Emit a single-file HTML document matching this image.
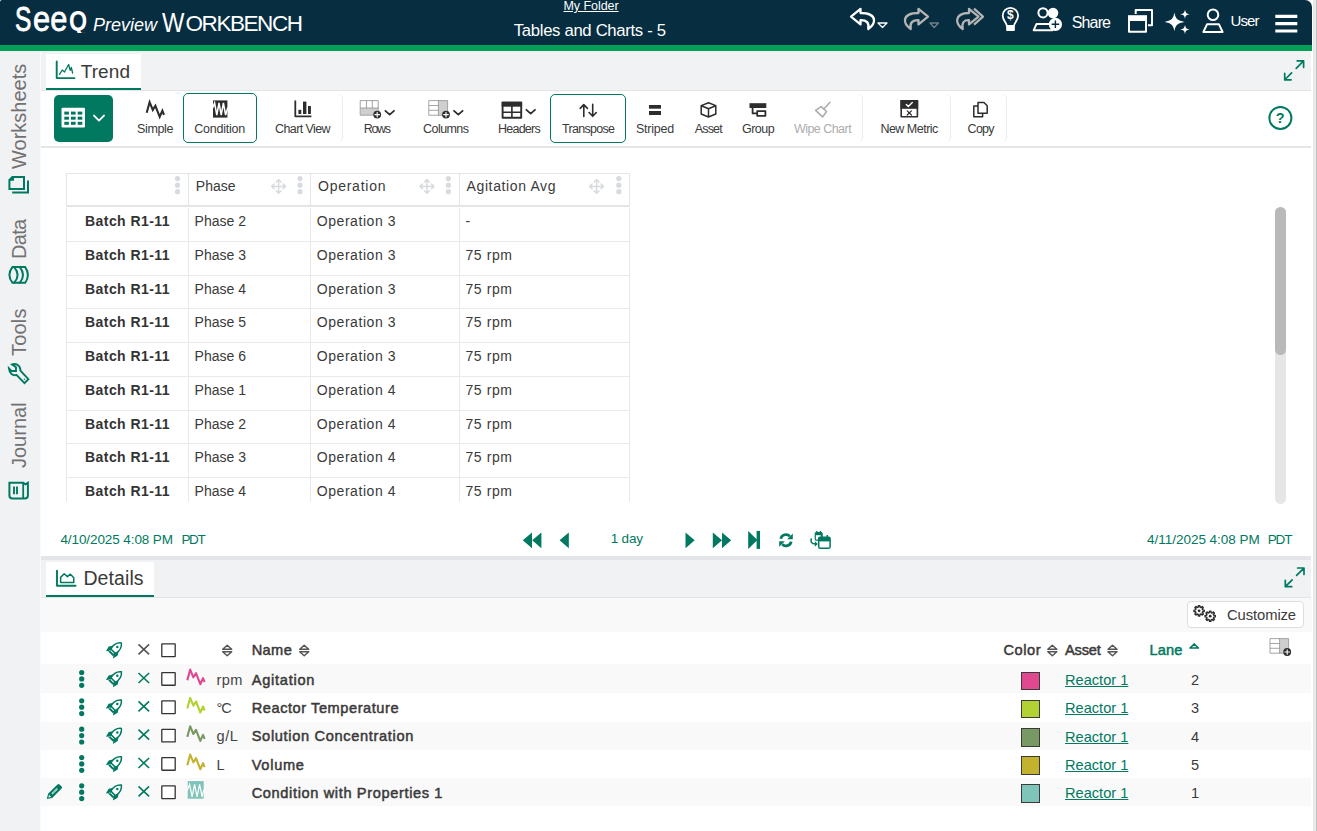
<!DOCTYPE html>
<html lang="en">
<head>
<meta charset="utf-8">
<title>Tables and Charts - 5</title>
<style>
*{box-sizing:border-box;margin:0;padding:0}
html,body{width:1317px;height:831px;overflow:hidden;background:#fff}
body{font-family:"Liberation Sans",sans-serif;color:#3a3a3a;position:relative;font-size:14px}
.abs{position:absolute}
.t{position:absolute;white-space:nowrap;line-height:1}
svg{position:absolute;overflow:visible}
/* ---------- header ---------- */
#hdr{position:absolute;left:0;top:0;width:1312px;height:51px;background:#062d40;border-radius:2px 7px 0 0;border-bottom:6px solid #00a059;overflow:hidden}
#hdr .w{color:#fff}
/* ---------- right window strip ---------- */
#strip{position:absolute;left:1312px;top:0;width:5px;height:831px;background:linear-gradient(90deg,#fff 0,#fff .5px,#e9e9e9 .5px,#e9e9e9 4px,#c4c4c4 4px)}
/* ---------- sidebar ---------- */
#side{position:absolute;left:0;top:51px;width:41px;height:780px;background:#f1f2f4;border-right:1px solid #fafafa}
#side .v{position:absolute;left:0;width:40px;transform-origin:0 0;transform:rotate(-90deg);white-space:nowrap;font-size:20px;color:#717171;line-height:1}
/* ---------- main ---------- */
#main{position:absolute;left:41px;top:51px;width:1271px;height:780px;background:#fff}
.phead{position:absolute;left:0;width:1270px;background:#f1f2f4;border-bottom:1px solid #e3e4e6}
.tab{position:absolute;background:#fff;border-bottom:2px solid #007960}
.teal{color:#007960}
.grp{top:2px;width:12px;height:50px;border-right:1px solid #ececec;border-radius:0 6px 6px 0}

.row{left:0;width:563px;height:33.75px;border-bottom:1px solid #e7e9eb}
.row .t{top:6.1px;font-size:14px;color:#3a3a3a}
.row .b{font-weight:bold;font-size:14px;letter-spacing:.44px;top:6.1px;color:#333}
.row .c1{left:127.6px}.row .c2{left:249.8px;letter-spacing:.55px}.row .c3{left:398.5px;letter-spacing:.58px}
</style>
</head>
<body>
<div id="hdr">
  <span class="t w" id="lgS" style="left:14.6px;top:1.2px;font-size:35px;-webkit-text-stroke:0.9px #fff;transform-origin:0 0;transform:scaleX(.7)">S</span>
  <span class="t w" id="lgE" style="left:32.8px;top:1.1px;font-size:35px;-webkit-text-stroke:0.8px #fff;transform-origin:0 0;transform:scaleX(.88)">ee</span>
  <span class="t w" id="lgQ" style="left:68.7px;top:6.9px;font-size:27.5px;height:25.7px;overflow:hidden;font-weight:bold;transform-origin:0 0;transform:scaleX(.85)">Q</span>
  <span class="t w" id="hPrev" style="left:93px;top:15.5px;font-size:18px;font-style:italic;letter-spacing:-0.01px">Preview</span>
  <span class="t w" id="hW" style="left:162px;top:9.9px;font-size:27px;transform-origin:0 0;transform:scaleX(.88)">W</span>
  <span class="t w" id="hOrk" style="left:185.5px;top:13px;font-size:22.5px;letter-spacing:-1.43px">ORKBENCH</span>
  <span class="t w" id="hFolder" style="left:563.5px;top:0px;font-size:12.5px;text-decoration:underline;letter-spacing:-0.06px">My Folder</span>
  <span class="t w" id="hTitle" style="left:513.8px;top:23px;font-size:16.7px;letter-spacing:-0.32px">Tables and Charts - 5</span>
  <svg width="1312" height="45" viewBox="0 0 1312 45" style="left:0;top:0" fill="none" stroke-linejoin="round">
    <!-- undo -->
    <path d="M860.5 8.8 L851 16.6 L860.5 24.4 V20.2 C866.5 20 869.5 22.5 868.3 29 C872.5 26 874.4 23 874 19.6 C873.3 15 868 13 860.5 13 Z" stroke="#fff" stroke-width="2.3"/>
    <path d="M878 23 H887 L882.5 27.5 Z" stroke="#fff" stroke-width="1.3"/>
    <!-- redo -->
    <path d="M918.5 8.8 L928 16.6 L918.5 24.4 V20.2 C912.5 20 909.5 22.5 910.7 29 C906.5 26 904.6 23 905 19.6 C905.7 15 911 13 918.5 13 Z" stroke="#b4b4b4" stroke-width="2.3"/>
    <path d="M930 23 H938.5 L934.2 27.5 Z" stroke="#6f7f89" stroke-width="1.3"/>
    <!-- redo all -->
    <path d="M969 8.8 L978.5 16.6 L969 24.4 V20.2 C964 20 961.5 22.5 962.7 29 C958.5 26 956.8 23 957.2 19.6 C957.9 15 962.5 13 969 13 Z" stroke="#b4b4b4" stroke-width="2.3"/>
    <path d="M974 8.6 L983 16.6 L974 24.6" stroke="#b4b4b4" stroke-width="2.3"/>
    <!-- bulb -->
    <path d="M1006.8 26 C1006.8 22.5 1002.7 21 1002.7 15.6 A7.7 7.7 0 0 1 1018.1 15.6 C1018.1 21 1014 22.5 1014 26 Z" stroke="#fff" stroke-width="1.8"/>
    <rect x="1006.7" y="26.5" width="7.6" height="4" fill="#fff" stroke="#fff" stroke-width="1"/>
    <!-- share people -->
    <circle cx="1053" cy="13" r="5.3" fill="#fff"/>
    <circle cx="1043" cy="12.8" r="4.6" stroke="#fff" stroke-width="2" fill="#062d40"/>
    <path d="M1036.5 24 H1050 L1052.5 30.3 H1033.6 Z" stroke="#fff" stroke-width="1.9"/>
    <circle cx="1055.4" cy="24.3" r="6.6" fill="#fff"/>
    <path d="M1051.6 24.3 H1059.2 M1055.4 20.5 V28.1" stroke="#062d40" stroke-width="1.4"/>
    <!-- windows -->
    <path d="M1135.7 14 V10 H1152 V25.3 H1148" stroke="#fff" stroke-width="2"/>
    <rect x="1129" y="20" width="17" height="11.8" stroke="#fff" stroke-width="2"/>
    <rect x="1128" y="15.2" width="19" height="5.5" fill="#fff"/>
    <!-- sparkles -->
    <path d="M1174.4 12.6 C1175.6 19 1177.5 20.8 1184.6 21.9 C1177.5 23 1175.6 24.8 1174.4 31.2 C1173.2 24.8 1171.3 23 1164.6 21.9 C1171.3 20.8 1173.2 19 1174.4 12.6 Z" fill="#fff"/>
    <path d="M1185 9.6 C1185.6 13 1186.4 13.8 1189.8 14.3 C1186.4 14.8 1185.6 15.6 1185 19 C1184.4 15.6 1183.6 14.8 1180.2 14.3 C1183.6 13.8 1184.4 13 1185 9.6 Z" fill="#fff"/>
    <path d="M1185 24.8 C1185.6 28.2 1186.4 29 1189.8 29.5 C1186.4 30 1185.6 30.8 1185 34.2 C1184.4 30.8 1183.6 30 1180.2 29.5 C1183.6 29 1184.4 28.2 1185 24.8 Z" fill="#fff"/>
    <!-- user -->
    <circle cx="1213" cy="14.8" r="5.3" stroke="#fff" stroke-width="2"/>
    <path d="M1207 24.3 H1219 L1222.6 32 H1203.4 Z" stroke="#fff" stroke-width="2"/>
    <!-- hamburger -->
    <path d="M1275.3 16.3 H1297.3 M1275.3 23.6 H1297.3 M1275.3 31 H1297.3" stroke="#fff" stroke-width="3.2"/>
  </svg>
  <span class="t" id="hDollar" style="left:1007.1px;top:9.3px;font-size:12px;font-weight:bold;color:#fff">$</span>
  <span class="t w" id="hShare" style="left:1071.8px;top:14.7px;font-size:16px;letter-spacing:-0.88px">Share</span>
  <span class="t w" id="hUser" style="left:1230.6px;top:13.2px;font-size:15px;letter-spacing:-0.92px">User</span>
</div>
<div id="strip"></div>
<div id="side">
  <span class="v" id="sWork" style="left:9px;top:118.3px">Worksheets</span>
  <span class="v" id="sData" style="left:9px;top:207.6px;letter-spacing:-0.7px">Data</span>
  <span class="v" id="sTools" style="left:9px;top:305px;letter-spacing:0.2px">Tools</span>
  <span class="v" id="sJour" style="left:9px;top:417px">Journal</span>
  <svg width="41" height="780" viewBox="0 51 41 780" style="left:0;top:0" fill="none" stroke="#007960" stroke-width="1.9" stroke-linejoin="round" stroke-linecap="round">
    <!-- worksheets icon -->
    <path d="M12.4 177 H24 V188.9 H9.4 V180 Z" stroke-width="2" stroke-linejoin="miter" stroke-linecap="butt"/>
    <path d="M9 180.8 L12.4 176.4 H14 V180.8 Z" fill="#007960" stroke="none"/>
    <path d="M28 180.4 V192.6 H12.2" stroke-width="2" stroke-linejoin="miter" stroke-linecap="butt"/>
    <!-- data icon -->
    <path d="M12.4 267.1 H25.2 Q27.9 271 27.9 274.9 Q27.9 278.8 25.2 282.7 H12.4 Q9.4 278.8 9.4 274.9 Q9.4 271 12.4 267.1 Z" stroke-width="2" stroke-linejoin="miter"/>
    <path d="M14.2 267.1 Q17.6 271 17.6 274.9 Q17.6 278.8 14.2 282.7 M19.8 267.1 Q23 271 23 274.9 Q23 278.8 19.8 282.7" stroke-width="2"/>
    <!-- tools icon (wrench) -->
    <path d="M12 364.4 C16 362.9 20.6 365.6 20.4 370.6 L28.4 379.2 L24.5 383.2 L16.4 374.9 C13 376.1 9.3 373.8 8.9 368.3 L11.4 371 H16 V367.3 Z" stroke-width="1.9" stroke-linejoin="miter"/>
    <circle cx="24.4" cy="379.2" r="0.7" fill="#007960" stroke="none"/>
    <!-- journal icon -->
    <path d="M9.4 482.8 H23.2 L25.4 484.4 L27.9 482.8 V495.6 Q27.9 498.6 24.9 498.6 H12.4 Q9.4 498.6 9.4 495.6 Z" stroke-width="2" stroke-linejoin="miter"/>
    <path d="M23.2 483.5 V498" stroke-width="1.8"/>
    <path d="M14 486.6 V494.2 M17 486.6 V494.2" stroke-width="1.9" stroke-linecap="butt"/>
  </svg>
</div>
<div id="main">
  <div class="phead" id="trendhead" style="top:0;height:40px"><div class="tab" style="left:5px;top:3px;width:95px;height:36px"></div>
    <svg width="1271" height="40" viewBox="41 51 1271 40" style="left:0;top:0" fill="none" stroke="#007960" stroke-linecap="round" stroke-linejoin="round">
      <path d="M56.7 61.5 V78.1 H74.5" stroke-width="1.9"/>
      <path d="M59.5 74.3 L62.3 70 L64.5 72 L68.6 64.5 L70.2 70.3 L71.3 67.5 L72.6 73" stroke-width="1.3"/>
      <path d="M1285 79.5 L1291.6 72.9 M1284.7 73.4 V79.8 H1291.1 M1296.2 68.3 L1303.3 61.2 M1297.2 60.9 H1303.6 V67.3" stroke-width="1.7"/>
    </svg>
    <span class="t" id="tTrend" style="left:39.7px;top:10.6px;font-size:19px;color:#3a3a3a;letter-spacing:0.09px">Trend</span>
  </div>
  <div id="toolbar" class="abs" style="left:0;top:40px;width:1270px;height:57px;border-bottom:2px solid #e5e6e8">
    <div class="abs" style="left:13px;top:4px;width:59px;height:47px;background:#007960;border-radius:5px"></div>
    <div class="abs" style="left:142px;top:2px;width:74px;height:49.6px;border:1.3px solid #007960;border-radius:5px"></div>
    <div class="abs" style="left:509px;top:3px;width:76px;height:48.5px;border:1.3px solid #007960;border-radius:5px"></div>
    <div class="abs grp" style="left:290px"></div><div class="abs grp" style="left:810px"></div><div class="abs grp" style="left:897.5px"></div><div class="abs grp" style="left:953.5px"></div>
    <svg width="1271" height="55" viewBox="41 91 1271 55" style="left:0;top:0" fill="none" stroke-linecap="round" stroke-linejoin="round">
      <!-- table button icon -->
      <rect x="61.5" y="107.8" width="23.5" height="19.6" rx="1.2" fill="#fff"/>
      <g fill="#007960"><rect x="64.3" y="111.6" width="4.6" height="3"/><rect x="71" y="111.6" width="4.6" height="3"/><rect x="77.7" y="111.6" width="4.6" height="3"/>
      <rect x="64.3" y="116.7" width="4.6" height="3"/><rect x="71" y="116.7" width="4.6" height="3"/><rect x="77.7" y="116.7" width="4.6" height="3"/>
      <rect x="64.3" y="121.8" width="4.6" height="3"/><rect x="71" y="121.8" width="4.6" height="3"/><rect x="77.7" y="121.8" width="4.6" height="3"/></g>
      <path d="M94 115.6 L99 120.6 L104 115.6" stroke="#fff" stroke-width="1.9"/>
      <!-- simple -->
      <path transform="translate(146 101)" d="M0.7 11.8 L3.6 1.2 L6.8 8.9 L9.4 4.8 L13.7 15.8 L16.4 9.8 L18 13.8" stroke="#2d2d2d" stroke-width="2.1" stroke-linecap="butt" stroke-linejoin="miter"/>
      <!-- condition -->
      <rect x="213" y="100.4" width="14.4" height="17.2" fill="#2d2d2d"/>
      <path d="M212.6 108 L214.6 103 L216.8 115 L219 103 L221.2 115 L223.4 103 L225.6 115 L227.7 108" stroke="#fff" stroke-width="1.5" stroke-linejoin="miter"/>
      <!-- chart view -->
      <path d="M295.3 100.5 V116.3 H311.4" stroke="#2d2d2d" stroke-width="1.8" stroke-linecap="butt"/>
      <g fill="#2d2d2d"><rect x="298.4" y="109.8" width="2.9" height="4.2"/><rect x="303" y="101.6" width="3.4" height="12.4"/><rect x="308" y="106" width="2.9" height="8"/></g>
      <!-- rows -->
      <rect x="360.6" y="108" width="17.6" height="7.2" fill="#cfcfcf"/>
      <path d="M360.6 100.6 H378.2 V115.2 H360.6 Z M360.6 108 H378.2 M366.5 100.6 V108 M372.3 100.6 V108" stroke="#9a9a9a" stroke-width="0.9"/>
      <circle cx="377.2" cy="114.6" r="3.9" fill="#2d2d2d"/><path d="M374.9 114.6 H379.5 M377.2 112.3 V116.9" stroke="#fff" stroke-width="1.1"/>
      <path d="M385.4 110.8 L389.7 114.6 L394 110.8" stroke="#2d2d2d" stroke-width="1.8"/>
      <!-- columns -->
      <rect x="438.4" y="100.6" width="9.2" height="14.6" fill="#cfcfcf"/>
      <path d="M429.2 100.6 H447.6 V115.2 H429.2 Z M438.4 100.6 V115.2 M429.2 105.5 H438.4 M429.2 110.3 H438.4" stroke="#9a9a9a" stroke-width="0.9"/>
      <circle cx="446" cy="114.6" r="3.9" fill="#2d2d2d"/><path d="M443.7 114.6 H448.3 M446 112.3 V116.9" stroke="#fff" stroke-width="1.1"/>
      <path d="M454 110.8 L458.3 114.6 L462.6 110.8" stroke="#2d2d2d" stroke-width="1.8"/>
      <!-- headers -->
      <rect x="502.6" y="102.6" width="18.6" height="15.2" stroke="#2d2d2d" stroke-width="1.9"/>
      <rect x="501.7" y="101.7" width="20.4" height="5" fill="#2d2d2d"/>
      <path d="M511.9 106 V118 M502 112.3 H522" stroke="#2d2d2d" stroke-width="1.6" stroke-linecap="butt"/>
      <path d="M526.4 109.8 L530.7 113.6 L535 109.8" stroke="#2d2d2d" stroke-width="1.8"/>
      <!-- transpose -->
      <path d="M583.8 116.5 V104.8 M580.2 108.4 L583.8 104.6 L587.4 108.4 M592.7 104.4 V116.1 M589.1 112.5 L592.7 116.3 L596.3 112.5" stroke="#2d2d2d" stroke-width="1.6"/>
      <!-- striped -->
      <rect x="649" y="105" width="12" height="3.7" fill="#2d2d2d"/><rect x="649" y="111" width="12" height="4" fill="#2d2d2d"/>
      <!-- asset -->
      <path d="M708.5 102.7 L715.8 105.6 V114 L708.5 117 L701.2 114 V105.6 Z M701.4 105.8 L708.5 108.8 L715.6 105.8 M708.5 108.8 V116.8" stroke="#2d2d2d" stroke-width="1.5"/>
      <!-- group -->
      <rect x="749.5" y="103.2" width="16.8" height="4.8" fill="#2d2d2d"/>
      <path d="M752.6 108 V113.4 H757" stroke="#2d2d2d" stroke-width="1.8" stroke-linecap="butt"/>
      <rect x="757.2" y="111.1" width="8.2" height="4.7" stroke="#2d2d2d" stroke-width="1.8"/>
      <!-- wipe -->
      <path d="M830 102.3 L824.6 108.2 M821.2 106.6 L826.6 111.6 L822.5 116.9 L815.6 110.4 Z" stroke="#adadad" stroke-width="1.6"/>
      <!-- new metric -->
      <rect x="901.2" y="100.8" width="16.2" height="16" stroke="#2d2d2d" stroke-width="1.6"/>
      <rect x="900.4" y="100" width="17.8" height="8.8" fill="#2d2d2d"/>
      <path d="M906.3 104.4 L908.3 106.4 L912.3 102.4" stroke="#fff" stroke-width="1.4"/>
      <path d="M907.2 110.8 L911.4 115 M911.4 110.8 L907.2 115" stroke="#2d2d2d" stroke-width="1.2"/>
      <!-- copy -->
      <path d="M978 102.5 H984 L987.2 105.7 V113.2 H978 Z M977.6 106 H973.8 V116.8 H982.6 V113.6" stroke="#2d2d2d" stroke-width="1.5"/>
      <!-- help -->
      <circle cx="1280.4" cy="117.9" r="11" stroke="#007960" stroke-width="2"/>
    </svg>
    <span class="t" id="tQ" style="left:1234.8px;top:20.2px;font-size:14.5px;font-weight:bold;color:#007960">?</span>
    <span class="t" id="tb0" style="left:96.0px;top:31.9px;font-size:12.5px;color:#3a3a3a;letter-spacing:-0.36px">Simple</span>
    <span class="t" id="tb1" style="left:153.3px;top:31.9px;font-size:12.5px;color:#3a3a3a;letter-spacing:-0.23px">Condition</span>
    <span class="t" id="tb2" style="left:234.0px;top:31.9px;font-size:12.5px;color:#3a3a3a;letter-spacing:-0.6px">Chart View</span>
    <span class="t" id="tb3" style="left:322.7px;top:31.9px;font-size:12.5px;color:#3a3a3a;letter-spacing:-1.32px">Rows</span>
    <span class="t" id="tb4" style="left:382.1px;top:31.9px;font-size:12.5px;color:#3a3a3a;letter-spacing:-0.57px">Columns</span>
    <span class="t" id="tb5" style="left:457.0px;top:31.9px;font-size:12.5px;color:#3a3a3a;letter-spacing:-0.76px">Headers</span>
    <span class="t" id="tb6" style="left:521.1px;top:31.9px;font-size:12.5px;color:#3a3a3a;letter-spacing:-0.73px">Transpose</span>
    <span class="t" id="tb7" style="left:595.0px;top:31.9px;font-size:12.5px;color:#3a3a3a;letter-spacing:-0.22px">Striped</span>
    <span class="t" id="tb8" style="left:653.8px;top:31.9px;font-size:12.5px;color:#3a3a3a;letter-spacing:-0.84px">Asset</span>
    <span class="t" id="tb9" style="left:701.0px;top:31.9px;font-size:12.5px;color:#3a3a3a;letter-spacing:-0.54px">Group</span>
    <span class="t" id="tb10" style="left:752.9px;top:31.9px;font-size:12.5px;color:#adadad;letter-spacing:-0.53px">Wipe Chart</span>
    <span class="t" id="tb11" style="left:839.4px;top:31.9px;font-size:12.5px;color:#3a3a3a;letter-spacing:-0.51px">New Metric</span>
    <span class="t" id="tb12" style="left:926.6px;top:31.9px;font-size:12.5px;color:#3a3a3a;letter-spacing:-0.73px">Copy</span>
  </div>
  <div id="tablearea" class="abs" style="left:0;top:97px;width:1271px;height:408px">
    <div id="tbl" class="abs" style="left:25px;top:25px;width:564px;height:329px;overflow:hidden">
      <div class="abs" style="left:1px;top:0;width:563px;height:329px">
      <div class="abs" style="left:-1px;top:0;width:564px;height:34px;border:1px solid #e3e5e7;border-bottom:2px solid #e3e5e7"></div>
      <div class="abs" style="left:121px;top:0;width:1px;height:34px;background:#e3e5e7"></div>
      <div class="abs" style="left:243px;top:0;width:1px;height:34px;background:#e3e5e7"></div>
      <div class="abs" style="left:392px;top:0;width:1px;height:34px;background:#e3e5e7"></div>
      <span class="t" id="th0" style="left:128.8px;top:5.8px;font-size:14px;letter-spacing:0.03px">Phase</span>
      <span class="t" id="th1" style="left:251.0px;top:5.8px;font-size:14px;letter-spacing:0.75px">Operation</span>
      <span class="t" id="th2" style="left:399.5px;top:5.8px;font-size:14px;letter-spacing:0.63px">Agitation Avg</span>
      <svg width="563" height="34" viewBox="67 173 563 34" style="left:0;top:0">
        <g fill="#d7dbdf"><circle cx="177.5" cy="178.6" r="2.6"/><circle cx="177.5" cy="185.2" r="2.6"/><circle cx="177.5" cy="191.7" r="2.6"/><circle cx="300.0" cy="178.6" r="2.6"/><circle cx="300.0" cy="185.2" r="2.6"/><circle cx="300.0" cy="191.7" r="2.6"/><circle cx="448.4" cy="178.6" r="2.6"/><circle cx="448.4" cy="185.2" r="2.6"/><circle cx="448.4" cy="191.7" r="2.6"/><circle cx="618.8" cy="178.6" r="2.6"/><circle cx="618.8" cy="185.2" r="2.6"/><circle cx="618.8" cy="191.7" r="2.6"/></g>
        <g transform="translate(278.6 186.4)" stroke="#d7dbdf" stroke-width="1.5" fill="none" stroke-linecap="round" stroke-linejoin="round"><path d="M-6.6 0 H6.6 M0 -6.6 V6.6 M-2.3 -4.5 L0 -6.9 L2.3 -4.5 M-2.3 4.5 L0 6.9 L2.3 4.5 M-4.5 -2.3 L-6.9 0 L-4.5 2.3 M4.5 -2.3 L6.9 0 L4.5 2.3"/></g>
        <g transform="translate(427.0 186.4)" stroke="#d7dbdf" stroke-width="1.5" fill="none" stroke-linecap="round" stroke-linejoin="round"><path d="M-6.6 0 H6.6 M0 -6.6 V6.6 M-2.3 -4.5 L0 -6.9 L2.3 -4.5 M-2.3 4.5 L0 6.9 L2.3 4.5 M-4.5 -2.3 L-6.9 0 L-4.5 2.3 M4.5 -2.3 L6.9 0 L4.5 2.3"/></g>
        <g transform="translate(596.6 186.4)" stroke="#d7dbdf" stroke-width="1.5" fill="none" stroke-linecap="round" stroke-linejoin="round"><path d="M-6.6 0 H6.6 M0 -6.6 V6.6 M-2.3 -4.5 L0 -6.9 L2.3 -4.5 M-2.3 4.5 L0 6.9 L2.3 4.5 M-4.5 -2.3 L-6.9 0 L-4.5 2.3 M4.5 -2.3 L6.9 0 L4.5 2.3"/></g>
      </svg>
      <div class="row abs" style="top:35.00px"><span class="t b" style="left:18px">Batch R1-11</span><span class="t c1">Phase 2</span><span class="t c2">Operation 3</span><span class="t c3">-</span></div>
      <div class="row abs" style="top:68.75px"><span class="t b" style="left:18px">Batch R1-11</span><span class="t c1">Phase 3</span><span class="t c2">Operation 3</span><span class="t c3">75 rpm</span></div>
      <div class="row abs" style="top:102.50px"><span class="t b" style="left:18px">Batch R1-11</span><span class="t c1">Phase 4</span><span class="t c2">Operation 3</span><span class="t c3">75 rpm</span></div>
      <div class="row abs" style="top:136.25px"><span class="t b" style="left:18px">Batch R1-11</span><span class="t c1">Phase 5</span><span class="t c2">Operation 3</span><span class="t c3">75 rpm</span></div>
      <div class="row abs" style="top:170.00px"><span class="t b" style="left:18px">Batch R1-11</span><span class="t c1">Phase 6</span><span class="t c2">Operation 3</span><span class="t c3">75 rpm</span></div>
      <div class="row abs" style="top:203.75px"><span class="t b" style="left:18px">Batch R1-11</span><span class="t c1">Phase 1</span><span class="t c2">Operation 4</span><span class="t c3">75 rpm</span></div>
      <div class="row abs" style="top:237.50px"><span class="t b" style="left:18px">Batch R1-11</span><span class="t c1">Phase 2</span><span class="t c2">Operation 4</span><span class="t c3">75 rpm</span></div>
      <div class="row abs" style="top:271.25px"><span class="t b" style="left:18px">Batch R1-11</span><span class="t c1">Phase 3</span><span class="t c2">Operation 4</span><span class="t c3">75 rpm</span></div>
      <div class="row abs" style="top:305.00px"><span class="t b" style="left:18px">Batch R1-11</span><span class="t c1">Phase 4</span><span class="t c2">Operation 4</span><span class="t c3">75 rpm</span></div>
      <div class="abs" style="left:-1px;top:35px;width:1px;height:300px;background:#e7e9eb"></div>
      <div class="abs" style="left:121px;top:35px;width:1px;height:300px;background:#e7e9eb"></div>
      <div class="abs" style="left:243px;top:35px;width:1px;height:300px;background:#e7e9eb"></div>
      <div class="abs" style="left:392px;top:35px;width:1px;height:300px;background:#e7e9eb"></div>
      <div class="abs" style="left:562px;top:35px;width:1px;height:300px;background:#e7e9eb"></div>
      </div>
    </div>
<div class="abs" style="left:1234px;top:59px;width:11px;height:296.5px;border-radius:5.5px;background:#e6e6e6"></div>
    <div class="abs" style="left:1234px;top:59px;width:11px;height:148px;border-radius:5.5px;background:#b9b9b9"></div>
    <span class="t teal" id="d1" style="left:19.4px;top:384.5px;font-size:13.5px;letter-spacing:-0.09px">4/10/2025 4:08 PM</span>
    <span class="t teal" id="d1z" style="left:140.5px;top:384.5px;font-size:13.5px;letter-spacing:-1.41px">PDT</span>
    <span class="t teal" id="d2" style="left:1106px;top:384.5px;font-size:13.5px;letter-spacing:-0.02px">4/11/2025 4:08 PM</span>
    <span class="t teal" id="d2z" style="left:1226.7px;top:384.5px;font-size:13.5px;letter-spacing:-1.1px">PDT</span>
    <span class="t teal" id="dDay" style="left:569.7px;top:384.3px;font-size:13.5px;letter-spacing:-0.18px">1 day</span>
    <svg width="1271" height="40" viewBox="41 520 1271 40" style="left:0;top:372px" fill="#007960" stroke-linejoin="round">
      <path d="M532 532.4 V548.2 L522.8 540.3 Z M541.4 532.4 V548.2 L532.2 540.3 Z"/>
      <path d="M568.8 532.4 V548.2 L559.6 540.3 Z"/>
      <path d="M685.5 532.4 V548.2 L694.7 540.3 Z"/>
      <path d="M712.8 532.4 V548.2 L722 540.3 Z M722 532.4 V548.2 L731.2 540.3 Z"/>
      <path d="M748.2 531 V548.9 L757.4 540 Z"/><rect x="756.6" y="530.9" width="3.4" height="18"/>
      <g fill="none" stroke="#007960" stroke-width="2.7" stroke-linecap="butt">
        <path d="M780.8 538.8 A5.3 5.3 0 0 1 789.8 536.2"/><path d="M791.2 541.6 A5.3 5.3 0 0 1 782.2 544.2"/>
      </g>
      <path d="M792.8 533.6 V539.2 H787.2 Z M779.2 546.8 V541.2 H784.8 Z"/>
      <g fill="none" stroke="#007960">
        <rect x="815.3" y="532.6" width="6.8" height="7.6" rx="1" stroke-width="1.2"/>
        <path d="M816.9 530.9 V532.8 M820.5 530.9 V532.8" stroke-width="1.3"/>
        <path d="M811.3 538.4 Q809.9 544 815.4 544" stroke-width="1.6"/>
      </g>
      <rect x="815.3" y="532.6" width="6.8" height="2.6"/>
      <path d="M814.8 541.2 L817.8 544 L814.8 546.8 Z"/>
      <rect x="818.7" y="537.2" width="11.4" height="11.1" rx="1.6" fill="#fff" stroke="#007960" stroke-width="1.5"/>
      <rect x="818.7" y="537.2" width="11.4" height="4.2"/>
      <path d="M821.5 535 V538 M827.3 535 V538" stroke="#007960" stroke-width="1.6" fill="none"/>
    </svg>
  </div>
  <div class="abs" style="left:0;top:505px;width:1270px;height:4px;background:#e4e5e8"></div>
  <div class="phead" id="dethead" style="top:509px;height:38px"><div class="tab" style="left:5px;top:2px;width:108px;height:35px"></div>
    <svg width="1271" height="38" viewBox="41 560 1271 38" style="left:0;top:0" fill="none" stroke="#007960" stroke-linecap="round" stroke-linejoin="round">
      <path d="M57 570.6 V585.8 H75.6" stroke-width="1.9"/>
      <path d="M60.6 582.6 V577.4 L64.2 573.8 L67.4 576.6 L70.4 574.2 L73.8 577.8 V582.6 Z" stroke-width="1.5"/>
      <path d="M1285.6 586.4 L1292.2 579.8 M1285.3 580.3 V586.7 H1291.7 M1296.6 575.4 L1303.7 568.3 M1297.6 568 H1304 V574.4" stroke-width="1.7"/>
    </svg>
    <span class="t" id="tDet" style="left:42.4px;top:8.5px;font-size:19.5px;color:#3a3a3a;letter-spacing:0.1px">Details</span>
  </div>
  <div id="details" class="abs" style="left:0;top:547px;width:1271px;height:233px">
    <div class="abs" style="left:0;top:0;width:1271px;height:33.6px;background:#f9f9f9"></div>
    <div class="abs" style="left:1145.5px;top:3.2px;width:117px;height:26.5px;background:#fff;border:1px solid #dcdfe2;border-radius:4px"></div>
    <span class="t" id="tCust" style="left:1186.0px;top:9.9px;font-size:14.8px;color:#3a3a3a;letter-spacing:-0.1px">Customize</span>
    <span class="t" id="chName" style="left:210.7px;top:45.3px;font-size:14.6px;-webkit-text-stroke:.5px;color:#3a3a3a;letter-spacing:0.39px">Name</span>
    <span class="t" id="chColor" style="left:962.5px;top:45.3px;font-size:14.6px;-webkit-text-stroke:.5px;color:#3a3a3a;letter-spacing:0.56px">Color</span>
    <span class="t" id="chAsset" style="left:1024.0px;top:45.3px;font-size:14.6px;-webkit-text-stroke:.5px;color:#3a3a3a;letter-spacing:-0.18px">Asset</span>
    <span class="t" id="chLane" style="left:1108.5px;top:45.3px;font-size:14.6px;-webkit-text-stroke:.5px;color:#007960;letter-spacing:0.11px">Lane</span>
    <div class="abs" style="left:0;top:65.8px;width:1270px;height:28.9px;background:#f9f9f9"></div>
    <div class="abs" style="left:0;top:123.5px;width:1270px;height:28.4px;background:#f9f9f9"></div>
    <div class="abs" style="left:0;top:179.9px;width:1270px;height:27.8px;background:#f9f9f9"></div>
    <span class="t" id="ru0" style="left:175.4px;top:74.6px;font-size:14.6px;color:#444;letter-spacing:0.43px">rpm</span>
    <span class="t" id="rn0" style="left:210.7px;top:74.6px;font-size:14.6px;-webkit-text-stroke:.5px;color:#3a3a3a;letter-spacing:0.75px">Agitation</span>
    <span class="t" id="ra0" style="left:1024.0px;top:74.9px;font-size:14.6px;color:#007960;text-decoration:underline;letter-spacing:0.01px">Reactor 1</span>
    <span class="t" id="rl0" style="left:1150.0px;top:74.9px;font-size:14.6px;color:#3a3a3a;letter-spacing:0px">2</span>
    <div class="abs" style="left:980.0px;top:73.6px;width:19px;height:18.6px;background:#e0488f;border:1.3px solid #3a3a3a"></div>
    <span class="t" id="ru1" style="left:175.4px;top:103.0px;font-size:14.6px;color:#444;letter-spacing:-1px">°C</span>
    <span class="t" id="rn1" style="left:210.7px;top:103.0px;font-size:14.6px;-webkit-text-stroke:.5px;color:#3a3a3a;letter-spacing:0.56px">Reactor Temperature</span>
    <span class="t" id="ra1" style="left:1024.0px;top:103.3px;font-size:14.6px;color:#007960;text-decoration:underline;letter-spacing:0.01px">Reactor 1</span>
    <span class="t" id="rl1" style="left:1150.0px;top:103.3px;font-size:14.6px;color:#3a3a3a;letter-spacing:0px">3</span>
    <div class="abs" style="left:980.0px;top:101.9px;width:19px;height:18.6px;background:#b2d234;border:1.3px solid #3a3a3a"></div>
    <span class="t" id="ru2" style="left:175.4px;top:131.3px;font-size:14.6px;color:#444;letter-spacing:0.65px">g/L</span>
    <span class="t" id="rn2" style="left:210.7px;top:131.3px;font-size:14.6px;-webkit-text-stroke:.5px;color:#3a3a3a;letter-spacing:0.67px">Solution Concentration</span>
    <span class="t" id="ra2" style="left:1024.0px;top:131.6px;font-size:14.6px;color:#007960;text-decoration:underline;letter-spacing:0.01px">Reactor 1</span>
    <span class="t" id="rl2" style="left:1150.0px;top:131.6px;font-size:14.6px;color:#3a3a3a;letter-spacing:0px">4</span>
    <div class="abs" style="left:980.0px;top:130.0px;width:19px;height:18.6px;background:#789963;border:1.3px solid #3a3a3a"></div>
    <span class="t" id="ru3" style="left:175.4px;top:159.6px;font-size:14.6px;color:#444;letter-spacing:0px">L</span>
    <span class="t" id="rn3" style="left:210.7px;top:159.6px;font-size:14.6px;-webkit-text-stroke:.5px;color:#3a3a3a;letter-spacing:0.72px">Volume</span>
    <span class="t" id="ra3" style="left:1024.0px;top:159.9px;font-size:14.6px;color:#007960;text-decoration:underline;letter-spacing:0.01px">Reactor 1</span>
    <span class="t" id="rl3" style="left:1150.0px;top:159.9px;font-size:14.6px;color:#3a3a3a;letter-spacing:0px">5</span>
    <div class="abs" style="left:980.0px;top:158.2px;width:19px;height:18.6px;background:#c2b22e;border:1.3px solid #3a3a3a"></div>
    <span class="t" id="rn4" style="left:210.7px;top:188.0px;font-size:14.6px;-webkit-text-stroke:.5px;color:#3a3a3a;letter-spacing:0.63px">Condition with Properties 1</span>
    <span class="t" id="ra4" style="left:1024.0px;top:188.3px;font-size:14.6px;color:#007960;text-decoration:underline;letter-spacing:0.01px">Reactor 1</span>
    <span class="t" id="rl4" style="left:1150.0px;top:188.3px;font-size:14.6px;color:#3a3a3a;letter-spacing:0px">1</span>
    <div class="abs" style="left:980.0px;top:186.0px;width:19px;height:18.6px;background:#7fc4b8;border:1.3px solid #3a3a3a"></div>
    <svg width="1271" height="233" viewBox="41 598 1271 233" style="left:0;top:0" fill="none" stroke-linecap="round" stroke-linejoin="round">
      <defs>
        <g id="rocket"><path d="M15.1 0.9 C15.6 5.4 13.2 9.2 9.2 11.6 L4.6 7 C6.8 2.8 10.8 0.5 15.1 0.9 Z" fill="#fff" stroke="#007960" stroke-width="1.5"/><circle cx="11" cy="5" r="1.25" fill="#007960"/><path fill="#007960" d="M6.4 3.8 L2.4 4.6 L-0.4 9.3 L4.4 8.8 Z M12.2 9.6 L11.4 13.6 L6.7 16.4 L7.2 11.6 Z M3.4 8.2 L7.8 12.6 L6.4 14 L2 9.6 Z"/></g>
        <g id="xx"><path d="M-0.3 -0.4 L10.3 9.6 M10.3 -0.4 L-0.3 9.6" stroke-width="1.6" stroke-linecap="butt"/></g>
        <g id="cb"><rect x="0.8" y="0.65" width="13.4" height="12.6" rx="0.3" stroke="#333" stroke-width="1.3" fill="#fff"/></g>
        <g id="wav"><path d="M0.7 11.8 L3.6 1.2 L6.8 8.9 L9.4 4.8 L13.7 15.8 L16.4 9.8 L18 13.8" stroke-width="2.1" stroke-linecap="butt" stroke-linejoin="round"/></g>
        <g id="srt"><path d="M1 4.8 L5.5 0.7 L10 4.8 Z M1 7.2 L5.5 11.3 L10 7.2 Z" stroke="#555" stroke-width="1.45"/></g>
        <g id="dots" fill="#007960"><circle cx="0" cy="0" r="2.6"/><circle cx="0" cy="6.4" r="2.6"/><circle cx="0" cy="12.8" r="2.6"/></g>
      </defs>
      <use href="#rocket" x="106.3" y="642.0"/>
      <use href="#xx" x="138.8" y="644.8" stroke="#555"/>
      <use href="#cb" x="161" y="643.3"/>
      <use href="#srt" x="221.7" y="644.5"/><use href="#srt" x="298.7" y="644.5"/><use href="#srt" x="1046.8" y="644.5"/><use href="#srt" x="1107" y="644.5"/>
      <path d="M1190 648 L1194.2 644 L1198.4 648 Z" stroke="#007960" stroke-width="1.7"/>
      <rect x="1279.6" y="638.6" width="9" height="14.6" fill="#cfcfcf"/>
      <path d="M1270.4 638.6 H1288.6 V653.2 H1270.4 Z M1279.6 638.6 V653.2 M1270.4 643.5 H1279.6 M1270.4 648.3 H1279.6" stroke="#9a9a9a" stroke-width="0.9"/>
      <circle cx="1287.2" cy="652" r="3.9" fill="#2d2d2d"/><path d="M1284.9 652 H1289.5 M1287.2 649.7 V654.3" stroke="#fff" stroke-width="1.1"/>
      <path d="M1204.2 610.1 L1204.2 611.5 L1202.7 611.7 L1202.3 612.7 L1203.3 613.9 L1202.2 615.0 L1201.0 614.0 L1200.0 614.4 L1199.8 615.9 L1198.4 615.9 L1198.2 614.4 L1197.2 614.0 L1196.0 615.0 L1194.9 613.9 L1195.9 612.7 L1195.5 611.7 L1194.0 611.5 L1194.0 610.1 L1195.5 609.9 L1195.9 608.9 L1194.9 607.7 L1196.0 606.6 L1197.2 607.6 L1198.2 607.2 L1198.4 605.7 L1199.8 605.7 L1200.0 607.2 L1201.0 607.6 L1202.2 606.6 L1203.3 607.7 L1202.3 608.9 L1202.7 609.9 Z" stroke="#2d2d2d" stroke-width="1.45"/><circle cx="1199.1" cy="610.8" r="1.4" fill="#2d2d2d"/>
      <path d="M1215.3 615.5 L1215.3 616.9 L1213.8 617.1 L1213.4 618.1 L1214.4 619.3 L1213.3 620.4 L1212.1 619.4 L1211.1 619.8 L1210.9 621.3 L1209.5 621.3 L1209.3 619.8 L1208.3 619.4 L1207.1 620.4 L1206.0 619.3 L1207.0 618.1 L1206.6 617.1 L1205.1 616.9 L1205.1 615.5 L1206.6 615.3 L1207.0 614.3 L1206.0 613.1 L1207.1 612.0 L1208.3 613.0 L1209.3 612.6 L1209.5 611.1 L1210.9 611.1 L1211.1 612.6 L1212.1 613.0 L1213.3 612.0 L1214.4 613.1 L1213.4 614.3 L1213.8 615.3 Z" stroke="#2d2d2d" stroke-width="1.45"/><circle cx="1210.2" cy="616.2" r="1.4" fill="#2d2d2d"/>
      <use href="#dots" x="81.7" y="672.5"/><use href="#rocket" x="106.3" y="670.8"/><use href="#xx" x="138.8" y="673.4" stroke="#007960"/><use href="#cb" x="161" y="672.0"/><use href="#wav" x="186.6" y="668.4" stroke="#e0488f"/>
      <use href="#dots" x="81.7" y="700.8"/><use href="#rocket" x="106.3" y="699.1"/><use href="#xx" x="138.8" y="701.7" stroke="#007960"/><use href="#cb" x="161" y="700.3"/><use href="#wav" x="186.6" y="696.7" stroke="#b2d234"/>
      <use href="#dots" x="81.7" y="729.2"/><use href="#rocket" x="106.3" y="727.5"/><use href="#xx" x="138.8" y="730.1" stroke="#007960"/><use href="#cb" x="161" y="728.7"/><use href="#wav" x="186.6" y="725.1" stroke="#789963"/>
      <use href="#dots" x="81.7" y="757.5"/><use href="#rocket" x="106.3" y="755.8"/><use href="#xx" x="138.8" y="758.4" stroke="#007960"/><use href="#cb" x="161" y="757.0"/><use href="#wav" x="186.6" y="753.4" stroke="#c2b22e"/>
      <use href="#dots" x="81.7" y="785.8"/><use href="#rocket" x="106.3" y="784.1"/><use href="#xx" x="138.8" y="786.7" stroke="#007960"/><use href="#cb" x="161" y="785.3"/><rect x="187.7" y="781.1" width="16" height="17.6" fill="#7fc4b8"/><path d="M187.4 790.0 l2.2 -5.6 l2.5 12.4 l2.5 -12.4 l2.5 12.4 l2.5 -12.4 l2.5 12.4 l1.6 -6.8" stroke="#fff" stroke-width="1.2" stroke-linejoin="miter"/><g transform="translate(46.8 783.6)" fill="#007960"><path d="M0 15.4 L1.3 10.2 L10.7 0.8 Q11.7 -0.2 12.7 0.8 L14.8 2.9 Q15.8 3.9 14.8 4.9 L5.4 14.3 Z"/><path d="M1.6 13.9 L2.3 11.2 L4.4 13.3 Z" fill="#fff"/><path d="M5.6 9.9 L10 5.5" stroke="#fff" stroke-width="1.5" stroke-linecap="round"/><path d="M5.9 9.6 L9.7 5.8" stroke="#007960" stroke-width="0.5"/></g>
    </svg>
  </div>
</div>
</body>
</html>
